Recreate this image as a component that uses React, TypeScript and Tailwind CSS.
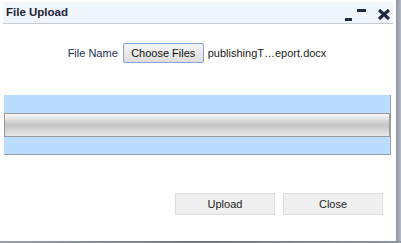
export default function App() {
  return (
    <div className="flex h-[243px] w-[401px] flex-col bg-white font-['Liberation_Sans',Arial,sans-serif]">
      <div className="flex flex-1">
        <div className="flex w-[396px] flex-col">
          {/* Title bar */}
          <div className="mx-[3px] mt-[2px] flex h-[22px] items-center justify-between border-b border-[#c8ccd4] bg-[#f1f5fc] pl-[3px] pr-[2px]">
            <span className="text-[11.5px] font-bold text-[#1b2236]">File Upload</span>
            <div className="flex h-full items-start">
              <span className="mr-[5px] mt-[16px] h-[3px] w-[7px] shrink-0 bg-[#1e2a44]" />
              <span className="mr-[11px] mt-[7px] h-[3px] w-[9px] shrink-0 bg-[#1e2a44]" />
              <svg width="14" height="11" viewBox="0 0 14 11" className="mt-[7px] shrink-0">
                <path d="M2 1 L12 10 M12 1 L2 10" stroke="#1e2a44" strokeWidth="3.2" />
              </svg>
            </div>
          </div>

          {/* File row */}
          <div className="mt-[19px] flex items-center justify-center pr-[2px] text-[11px] text-[#1a1a1a]">
            <span className="mr-[5px] text-[#1e3050]">File Name</span>
            <button className="h-[20px] w-[81px] rounded-[2px] border border-[#7ea6e0] bg-gradient-to-b from-[#f6f6f6] to-[#dedede] text-[11px] text-[#111]">
              Choose Files
            </button>
            <span className="ml-[4px]">publishingT…eport.docx</span>
          </div>

          {/* Progress area */}
          <div className="ml-[4px] mt-[32px] flex h-[60px] w-[387px] flex-col justify-center border-b border-r border-[#9aa0a8] bg-[#bbdcfd]">
            <div className="h-[24px] w-[386px] border border-[#999] bg-gradient-to-b from-[#fafafa] via-[#c4c4c4] to-[#e8e8e8]" />
          </div>

          {/* Buttons */}
          <div className="mt-[38px] flex justify-end gap-[8px] pr-[13px]">
            <button className="h-[22px] w-[100px] border border-[#dcdcdc] bg-[#f0f0f0] text-[11px] text-[#222]">
              Upload
            </button>
            <button className="h-[22px] w-[100px] border border-[#dcdcdc] bg-[#f0f0f0] text-[11px] text-[#222]">
              Close
            </button>
          </div>
        </div>
        <div className="w-[5px] bg-gradient-to-r from-[#8f96a3] to-[#b4b9c2]" />
      </div>
      <div className="h-[2px] bg-gradient-to-r from-[#9aa0ab] via-[#6f7685] to-[#8e95a2]" />
    </div>
  )
}
